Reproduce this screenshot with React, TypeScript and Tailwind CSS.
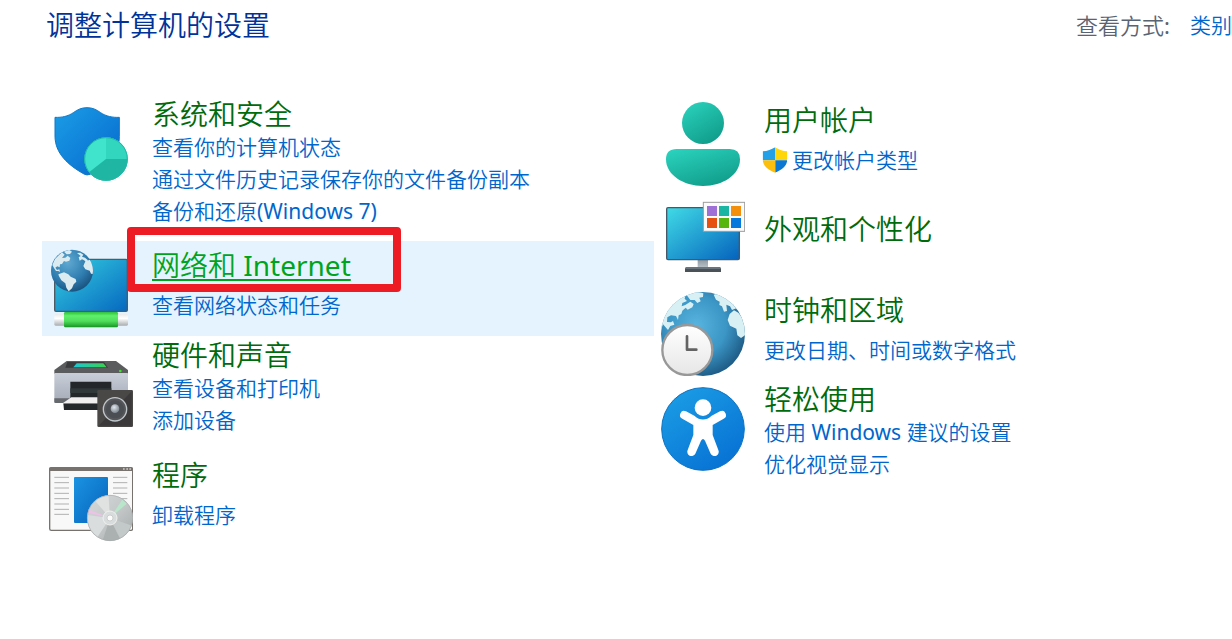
import React from "react";

function SecurityIcon() {
  return (
    <svg className="block size-full" viewBox="27 36 252 252" aria-hidden="true">
      <defs>
        <linearGradient id="shield" x1="0" y1="0" x2="1" y2="1">
          <stop offset="0" stopColor="#1b9de6" />
          <stop offset="1" stopColor="#0567cd" />
        </linearGradient>
      </defs>
      <path
        d="M45 82C65 83 84 79 100 68C114 58 125 53 141 53C157 53 168 58 182 68C198 79 218 83 238 82V140C238 196 190 236 150 253Q141 257 132 252C84 225 45 190 45 138Z"
        fill="url(#shield)"
        stroke="#0d78c8"
        strokeWidth="3"
      />
      <circle cx="198" cy="207" r="65" fill="#40e4cd" />
      <path d="M198 207V142A65 65 0 0 1 263 207Z" fill="#32d5be" />
      <path d="M198 207H263A65 65 0 0 1 147 247Z" fill="#1fb7a4" />
      <circle cx="198" cy="207" r="64" fill="none" stroke="#1fb9a6" strokeWidth="3" />
    </svg>
  );
}

function NetworkIcon() {
  return (
    <svg className="block size-full" viewBox="27 33 252 252" aria-hidden="true">
      <defs>
        <linearGradient id="netScreen" x1="0" y1="0" x2="1" y2="1">
          <stop offset="0" stopColor="#35cfe0" />
          <stop offset="1" stopColor="#0668c0" />
        </linearGradient>
        <linearGradient id="cable" x1="0" y1="0" x2="0" y2="1">
          <stop offset="0" stopColor="#2fbf3b" />
          <stop offset="0.25" stopColor="#5ff06c" />
          <stop offset="0.6" stopColor="#50dd5b" />
          <stop offset="1" stopColor="#159424" />
        </linearGradient>
        <linearGradient id="plug" x1="0" y1="0" x2="0" y2="1">
          <stop offset="0" stopColor="#e9e9e9" />
          <stop offset="0.4" stopColor="#ffffff" />
          <stop offset="1" stopColor="#a9adb0" />
        </linearGradient>
        <radialGradient id="netGlobe" cx="0.4" cy="0.3" r="0.75">
          <stop offset="0" stopColor="#5fa9d2" />
          <stop offset="0.6" stopColor="#2f7db0" />
          <stop offset="1" stopColor="#174e79" />
        </radialGradient>
        <clipPath id="netGlobeClip">
          <circle cx="96" cy="107" r="63" />
        </clipPath>
      </defs>
      <rect x="44" y="73" width="218" height="156" rx="4" fill="url(#netScreen)" stroke="#4e5b64" strokeWidth="4" />
      <rect x="43" y="236" width="221" height="36" rx="4" fill="url(#plug)" />
      <rect x="72" y="231" width="162" height="46" rx="4" fill="url(#cable)" />
      <circle cx="96" cy="107" r="63" fill="url(#netGlobe)" />
      <g clipPath="url(#netGlobeClip)" fill="#dcebf0">
        <path d="M37 90L45 72L58 59L66 52L74 59L66 69L76 68L83 62L91 69L88 77L78 80L72 78L66 87L60 88L59 97L52 94L46 98L51 105L58 103L60 111L55 108L48 108L42 99Z" />
        <path d="M72 50L87 44L96 50L90 57L80 58Z" />
        <path d="M55 118L72 112L85 118L92 125L107 132L109 140L101 148L96 160L86 169L79 158L76 145L64 136L57 124Z" />
        <path d="M111 54L121 53L130 59L126 65L135 68L144 76L139 81L131 75L126 73L119 77L116 67L122 63Z" />
        <path d="M136 79L150 74L166 94L160 117L153 116L149 107L136 103L130 93Z" />
      </g>
    </svg>
  );
}

function PrinterIcon() {
  return (
    <svg className="block size-full" viewBox="27 21 252 252" aria-hidden="true">
      <defs>
        <linearGradient id="printerBody" x1="0" y1="0" x2="0" y2="1">
          <stop offset="0" stopColor="#c9ced8" />
          <stop offset="1" stopColor="#a4abb7" />
        </linearGradient>
        <linearGradient id="scanGlass" x1="0" y1="0" x2="1" y2="0">
          <stop offset="0" stopColor="#1fc6d4" />
          <stop offset="1" stopColor="#39d24c" />
        </linearGradient>
        <radialGradient id="cone" cx="0.4" cy="0.35" r="0.7">
          <stop offset="0" stopColor="#e2e8ee" />
          <stop offset="1" stopColor="#747d86" />
        </radialGradient>
      </defs>
      <path d="M80 48H228L264 75V86H43V75Z" fill="#5a5c5e" />
      <path d="M82 51H192L204 68H76Z" fill="#393b3d" />
      <path d="M110 55H190L200 67H100Z" fill="url(#scanGlass)" />
      <rect x="43" y="84" width="221" height="90" rx="3" fill="url(#printerBody)" />
      <path d="M43 160H92V174H47Q43 174 43 170Z" fill="#66696d" />
      <circle cx="241" cy="78" r="4" fill="#39e622" />
      <path d="M91 110H214V160H91Z" fill="#232729" />
      <path d="M91 130H214V144H91Z" fill="#30383a" />
      <path d="M70 175H180V195H72Z" fill="#242729" />
      <path d="M94 157H190V175H68Z" fill="#f0eeee" />
      <rect x="172" y="135" width="107" height="111" rx="4" fill="#4a4747" />
      <path d="M275 139V242H176Z" fill="#3b3939" />
      <circle cx="225" cy="193" r="35" fill="#55565a" stroke="#bfc6ca" strokeWidth="4" />
      <circle cx="225" cy="193" r="27" fill="#4b4e52" />
      <circle cx="225" cy="191" r="13" fill="url(#cone)" />
    </svg>
  );
}

function ProgramsIcon() {
  return (
    <svg className="block size-full" viewBox="27 21 252 252" aria-hidden="true">
      <defs>
        <linearGradient id="page" x1="0" y1="0" x2="1" y2="1">
          <stop offset="0" stopColor="#1b93e2" />
          <stop offset="1" stopColor="#0563bb" />
        </linearGradient>
        <linearGradient id="disc" x1="0" y1="0" x2="1" y2="1">
          <stop offset="0" stopColor="#d7dada" />
          <stop offset="0.5" stopColor="#c4c8c8" />
          <stop offset="1" stopColor="#a3a8a8" />
        </linearGradient>
        <clipPath id="discClip">
          <circle cx="210" cy="189" r="68" />
        </clipPath>
      </defs>
      <rect x="29" y="39" width="249" height="187" rx="5" fill="#f8f8f8" stroke="#77726e" strokeWidth="4" />
      <path d="M27 48V42Q27 36 33 36H273Q279 36 279 42V48Z" fill="#77726e" />
      <path d="M249 42H254M259 42H264M268 42H273" stroke="#d0cecb" strokeWidth="4" />
      <path
        d="M43 67H87M43 83H87M43 99H87M43 115H87M43 131H87M43 147H87M43 163H87M43 178H87M219 67H262M219 83H262M219 99H262M219 115H262M219 131H262"
        stroke="#b0b0b0"
        strokeWidth="3"
      />
      <rect x="102" y="66" width="102" height="138" rx="3" fill="url(#page)" />
      <circle cx="210" cy="189" r="69" fill="url(#disc)" />
      <g clipPath="url(#discClip)">
        <path d="M210 189L150 120L205 112Z" fill="#e0e2e2" />
        <path d="M210 189L185 265L245 265Z" fill="#abb0b0" />
        <path d="M210 189L245 260L285 215Z" fill="#c3c8c8" />
        <path d="M210 189L142 180L140 220L170 250Z" fill="#dadddd" />
        <path d="M210 189L140 172L144 163Z" fill="#ecc2e6" />
        <path d="M210 189L247 134L260 146Z" fill="#b9e6cb" />
      </g>
      <circle cx="210" cy="189" r="68" fill="none" stroke="#a6abab" strokeWidth="2" />
      <circle cx="210" cy="189" r="21" fill="#d9dcdc" stroke="#f0f1f1" strokeWidth="3" />
      <circle cx="210" cy="189" r="9" fill="#fbfbfb" stroke="#b9bdbd" strokeWidth="2" />
    </svg>
  );
}

function UserIcon() {
  return (
    <svg className="block size-full" viewBox="18 36 252 252" aria-hidden="true">
      <defs>
        <linearGradient id="user" x1="0.2" y1="0" x2="0.8" y2="1">
          <stop offset="0" stopColor="#29d0bb" />
          <stop offset="1" stopColor="#0f9a88" />
        </linearGradient>
      </defs>
      <circle cx="144" cy="99" r="63" fill="url(#user)" />
      <path d="M65 177H224Q255 177 255 208C255 255 203 288 144 288S33 255 33 208Q33 177 65 177Z" fill="url(#user)" />
    </svg>
  );
}

function AppearanceIcon() {
  return (
    <svg className="block size-full" viewBox="18 0 252 252" aria-hidden="true">
      <defs>
        <linearGradient id="appScreen" x1="0" y1="0" x2="1" y2="1">
          <stop offset="0" stopColor="#40dbe6" />
          <stop offset="1" stopColor="#0562bd" />
        </linearGradient>
        <linearGradient id="stand" x1="0" y1="0" x2="0" y2="1">
          <stop offset="0" stopColor="#8d98a1" />
          <stop offset="1" stopColor="#bdc5cb" />
        </linearGradient>
      </defs>
      <rect x="128" y="193" width="31" height="27" fill="url(#stand)" />
      <path d="M93 216H195L198 221V231H90V221Z" fill="#4a5258" />
      <path d="M93 216H195L198 222H90Z" fill="#69747c" />
      <rect x="35" y="38" width="218" height="156" rx="4" fill="url(#appScreen)" stroke="#485866" strokeWidth="4" />
      <rect x="145" y="22" width="124" height="87" fill="#fbfbfb" stroke="#9c9c9c" strokeWidth="3" />
      <rect x="156" y="33" width="30" height="30" fill="#9f70d6" />
      <rect x="192" y="33" width="30" height="30" fill="#1bb5a4" />
      <rect x="228" y="33" width="30" height="30" fill="#f28f0c" />
      <rect x="156" y="69" width="30" height="30" fill="#e65011" />
      <rect x="192" y="69" width="30" height="30" fill="#57b60e" />
      <rect x="228" y="69" width="30" height="30" fill="#0679dc" />
    </svg>
  );
}

function ClockIcon() {
  return (
    <svg className="block size-full" viewBox="18 21 252 252" aria-hidden="true">
      <defs>
        <radialGradient id="bigGlobe" cx="0.42" cy="0.4" r="0.65">
          <stop offset="0" stopColor="#58b4df" />
          <stop offset="0.55" stopColor="#3b95c5" />
          <stop offset="1" stopColor="#1b5680" />
        </radialGradient>
        <linearGradient id="clockFace" x1="0" y1="0" x2="0" y2="1">
          <stop offset="0" stopColor="#ffffff" />
          <stop offset="1" stopColor="#e6e6e6" />
        </linearGradient>
        <clipPath id="bigGlobeClip">
          <circle cx="144" cy="147" r="126" />
        </clipPath>
      </defs>
      <circle cx="144" cy="147" r="126" fill="url(#bigGlobe)" />
      <g clipPath="url(#bigGlobeClip)" fill="#d8f0f4">
        <path d="M14 145L20 105L42 67L72 40L91 32L89 41L96 48L82 54L80 64L91 60L106 50L116 57L112 67L98 74L92 68L82 77L79 87L71 91L69 105L63 93L48 91L37 97L36 111L48 112L54 108L58 119L46 123L39 135L24 118Z" />
        <path d="M93 28L122 20L145 25L144 36L133 38L137 49L127 54L119 45L106 45Z" />
        <path d="M176 29L190 25L215 35L237 54L244 70L231 75L225 64L214 59L216 78L207 80L201 64L193 60L194 50L183 44Z" />
        <path d="M224 87L237 76L250 83L275 115L278 145L258 159L247 151L244 131L225 122L218 105Z" />
      </g>
      <circle cx="97" cy="195" r="75" fill="url(#clockFace)" stroke="#989898" strokeWidth="7" />
      <path d="M96 154V194H124" fill="none" stroke="#636363" strokeWidth="8" strokeLinecap="round" strokeLinejoin="round" />
    </svg>
  );
}

function AccessIcon() {
  return (
    <svg className="block size-full" viewBox="18 21 252 252" aria-hidden="true">
      <defs>
        <linearGradient id="access" x1="0.15" y1="0" x2="0.85" y2="1">
          <stop offset="0" stopColor="#1b9de5" />
          <stop offset="1" stopColor="#066fd3" />
        </linearGradient>
      </defs>
      <circle cx="144" cy="147" r="124" fill="url(#access)" stroke="#0c73c2" strokeWidth="3" />
      <circle cx="144" cy="83" r="25" fill="#fff" />
      <path
        d="M93 94L118 107Q144 130 170 107L195 94A12 12 0 0 1 206 116L173 135V165L190 210A12 12 0 0 1 167 221L150 182Q144 172 138 182L121 221A12 12 0 0 1 98 210L115 165V135L82 116A12 12 0 0 1 93 94Z"
        fill="#fff"
      />
    </svg>
  );
}

function UacShield() {
  return (
    <svg className="-ml-0.5 size-[26px] shrink-0" viewBox="320 170 78 78" aria-hidden="true">
      <defs>
        <clipPath id="uac">
          <path d="M322 183C337 183 348 178 359 171C370 178 381 183 396 183V206C396 228 377 240 359 247C341 240 322 228 322 206Z" />
        </clipPath>
      </defs>
      <g clipPath="url(#uac)">
        <path d="M320 170H360V210H320Z" fill="#24a0e8" />
        <path d="M360 170H398V210H360Z" fill="#ffd60a" />
        <path d="M320 210H360V248H320Z" fill="#fdbf0d" />
        <path d="M360 210H398V248H360Z" fill="#0b78d4" />
      </g>
    </svg>
  );
}

/* Latin runs take the regular weight, Chinese keeps the lighter inherited one. */
function MixedText({ text }: { text: string }) {
  return (
    <span>
      {text.split(/([\x20-\x7e]+)/).map((part, i) =>
        i % 2 ? (
          <span key={i} className="font-normal">
            {part}
          </span>
        ) : (
          part
        ),
      )}
    </span>
  );
}

type Task = { label: string; shield?: boolean };
type CategoryProps = {
  icon: React.ReactNode;
  title: string;
  tasks: Task[];
  rowClass: string;
  iconClass: string;
  textClass: string;
  active?: boolean;
};

function Category({ icon, title, tasks, rowClass, iconClass, textClass, active }: CategoryProps) {
  return (
    <section className={"flex items-start gap-[19px] pl-[7px] " + rowClass + (active ? " bg-[#e5f3ff]" : "")}>
      <div className={"size-[84px] shrink-0 " + iconClass}>{icon}</div>
      <div className={"flex flex-col whitespace-nowrap " + textClass}>
        <h2 className="relative text-[28px] leading-[34px]">
          <a
            href="#"
            className={
              active
                ? "text-[#00a41c] underline decoration-2 underline-offset-3 [text-decoration-skip-ink:none]"
                : "text-[#006b0b]"
            }
          >
            <MixedText text={title} />
          </a>
          {active && (
            <span className="pointer-events-none absolute -top-[21px] -left-[25px] h-[65px] w-[274px] rounded-[4px] border-8 border-[#ed1c24]" />
          )}
        </h2>
        {tasks.length > 0 && (
          <ul className="text-[21px] leading-[32px]">
            {tasks.map((t) => (
              <li key={t.label}>
                <a href="#" className="flex items-center gap-1 text-[#0066cc]">
                  {t.shield && <UacShield />}
                  <MixedText text={t.label} />
                </a>
              </li>
            ))}
          </ul>
        )}
      </div>
    </section>
  );
}

export default function App() {
  return (
    <main className="min-h-screen overflow-x-hidden bg-white pb-8 pl-[42px] font-['Noto_Sans','Noto_Sans_CJK_SC',sans-serif] font-[350]">
      <header className="flex items-center justify-between pt-2 pl-1 whitespace-nowrap">
        <h1 className="text-[28px] leading-[34px] text-[#003399]">调整计算机的设置</h1>
        <div className="flex items-center gap-5 leading-[34px]">
          <span id="view-label" className="text-[22px] text-[#596473]">
            <MixedText text="查看方式:" />
          </span>
          <button type="button" aria-labelledby="view-label view-value" className="text-[21px] text-[#0066cc]">
            <span id="view-value">类别</span>
          </button>
        </div>
      </header>
      <div className="grid grid-cols-[612fr_578fr] pt-[55px]">
        <div>
          <Category
            icon={<SecurityIcon />}
            title="系统和安全"
            tasks={[{ label: "查看你的计算机状态" }, { label: "通过文件历史记录保存你的文件备份副本" }, { label: "备份和还原(Windows 7)" }]}
            rowClass="pb-[14px]"
            iconClass="mt-[5px]"
            textClass=""
          />
          <Category
            icon={<NetworkIcon />}
            title="网络和 Internet"
            tasks={[{ label: "查看网络状态和任务" }]}
            rowClass="pt-1 pb-[6px]"
            iconClass="mt-[1px]"
            textClass="mt-[3px] gap-[7px]"
            active
          />
          <Category
            icon={<PrinterIcon />}
            title="硬件和声音"
            tasks={[{ label: "查看设备和打印机" }, { label: "添加设备" }]}
            rowClass="pt-[2px] pb-[15px]"
            iconClass="mt-[14px]"
            textClass=""
          />
          <Category
            icon={<ProgramsIcon />}
            title="程序"
            tasks={[{ label: "卸载程序" }]}
            rowClass="pt-1"
            iconClass="mt-[7px]"
            textClass="mt-[3px] gap-[7px]"
          />
        </div>
        <div>
          <Category
            icon={<UserIcon />}
            title="用户帐户"
            tasks={[{ label: "更改帐户类型", shield: true }]}
            rowClass="pb-1"
            iconClass="mt-[5px]"
            textClass="mt-[6px] gap-[7px]"
          />
          <Category
            icon={<AppearanceIcon />}
            title="外观和个性化"
            tasks={[]}
            rowClass="pt-1 pb-[9px]"
            iconClass="mt-[1px]"
            textClass="mt-[18px]"
          />
          <Category
            icon={<ClockIcon />}
            title="时钟和区域"
            tasks={[{ label: "更改日期、时间或数字格式" }]}
            rowClass="pt-1 pb-1"
            iconClass=""
            textClass="mt-[1px] gap-[7px]"
          />
          <Category
            icon={<AccessIcon />}
            title="轻松使用"
            tasks={[{ label: "使用 Windows 建议的设置" }, { label: "优化视觉显示" }]}
            rowClass="pt-[2px]"
            iconClass="mt-[5px]"
            textClass=""
          />
        </div>
      </div>
    </main>
  );
}
